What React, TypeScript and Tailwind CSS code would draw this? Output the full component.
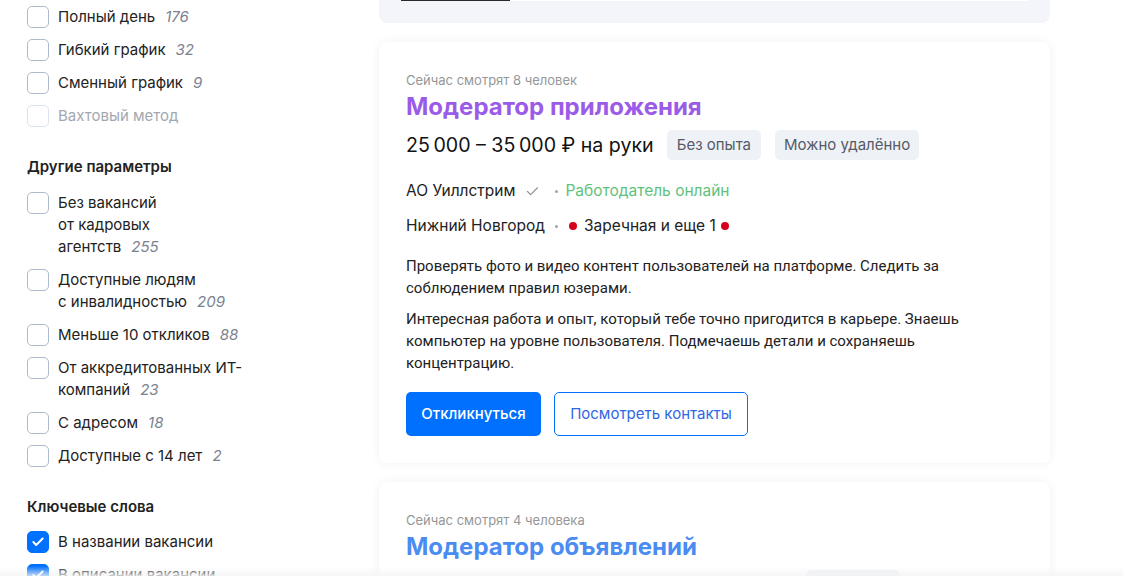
import { Check } from "lucide-react";

type FilterItem = {
  lines: string[];
  count?: number;
  checked?: boolean;
  disabled?: boolean;
};

const scheduleItems: FilterItem[] = [
  { lines: ["Полный день"], count: 176 },
  { lines: ["Гибкий график"], count: 32 },
  { lines: ["Сменный график"], count: 9 },
  { lines: ["Вахтовый метод"], disabled: true },
];

const otherItems: FilterItem[] = [
  { lines: ["Без вакансий", "от кадровых", "агентств"], count: 255 },
  { lines: ["Доступные людям", "с инвалидностью"], count: 209 },
  { lines: ["Меньше 10 откликов"], count: 88 },
  { lines: ["От аккредитованных ИТ-", "компаний"], count: 23 },
  { lines: ["С адресом"], count: 18 },
  { lines: ["Доступные с 14 лет"], count: 2 },
];

const keywordItems: FilterItem[] = [
  { lines: ["В названии вакансии"], checked: true },
  { lines: ["В описании вакансии"], checked: true },
];

function FilterRow({ item }: { item: FilterItem }) {
  return (
    <label className="flex items-start gap-[9px]">
      <span
        className={`flex h-[22px] w-[22px] shrink-0 items-center justify-center rounded-[5px] border ${
          item.checked
            ? "border-[#0070ff] bg-[#0070ff]"
            : item.disabled
              ? "border-[#dde3ea] bg-white"
              : "border-[#aebacb] bg-white"
        }`}
      >
        {item.checked && <Check className="h-[14px] w-[14px] text-white" strokeWidth={3.5} />}
      </span>
      <span
        className={`text-[15px] leading-[22px] ${item.disabled ? "text-[#a3a8b0]" : "text-[#222]"}`}
      >
        {item.lines.map((line, i) => (
          <span key={i} className="block whitespace-nowrap">
            {line}
            {i === item.lines.length - 1 && item.count !== undefined && (
              <span className="ml-[10px] italic text-[#7b8290]">{item.count}</span>
            )}
          </span>
        ))}
      </span>
    </label>
  );
}

function Sidebar() {
  return (
    <aside className="w-[379px] shrink-0 pl-[27px] pt-[6px]">
      <div className="flex flex-col gap-[11px]">
        {scheduleItems.map((it, i) => (
          <FilterRow key={i} item={it} />
        ))}
      </div>

      <h3 className="mt-[29px] text-[15px] font-semibold leading-[22px] text-[#222]">Другие параметры</h3>
      <div className="mt-[14px] flex flex-col gap-[11px]">
        {otherItems.map((it, i) => (
          <FilterRow key={i} item={it} />
        ))}
      </div>

      <h3 className="mt-[29px] text-[15px] font-semibold leading-[22px] text-[#222]">Ключевые слова</h3>
      <div className="mt-[13px] flex flex-col gap-[11px]">
        {keywordItems.map((it, i) => (
          <FilterRow key={i} item={it} />
        ))}
      </div>
    </aside>
  );
}

function MetroDot() {
  return <span className="inline-block h-[8px] w-[8px] rounded-full bg-[#d6001c]" />;
}

function Tags() {
  return (
    <>
      <span className="ml-[13px] rounded-[5px] bg-[#eef1f6] px-[10px] text-[15px] leading-[30px] text-[#555a66]">
        Без опыта
      </span>
      <span className="ml-[14px] rounded-[5px] bg-[#eef1f6] px-[9px] text-[15px] leading-[30px] text-[#555a66]">
        Можно удалённо
      </span>
    </>
  );
}

function VacancyCard() {
  return (
    <div className="rounded-[8px] bg-white px-[27px] pb-[27px] pt-[28px] shadow-[0_0_10px_rgba(40,60,120,0.07)]">
      <div className="text-[13px] leading-[20px] text-[#959799]">Сейчас смотрят 8 человек</div>
      <h2 className="mt-[2px] text-[24px] font-bold leading-[30px] text-[#9a5ce8]">Модератор приложения</h2>

      <div className="mt-[8px] flex items-center">
        <span className="text-[19.6px] leading-[30px] text-[#111]">25{"\u2009"}000 – 35{"\u2009"}000 ₽ на руки</span>
        <Tags />
      </div>

      <div className="mt-[20px] flex items-center text-[15.5px] leading-[22px] text-[#222]">
        <span>АО Уиллстрим</span>
        <Check className="ml-[10px] h-[15px] w-[15px] text-[#8a9099]" strokeWidth={1.8} />
        <span className="ml-[15px] mr-[7px] inline-block h-[3px] w-[3px] rounded-full bg-[#a0a4ab]" />
        <span className="text-[#5fc27c]">Работодатель онлайн</span>
      </div>

      <div className="mt-[13px] flex items-center text-[15.5px] leading-[22px] text-[#222]">
        <span>Нижний Новгород</span>
        <span className="ml-[10px] mr-[11px] inline-block h-[3px] w-[3px] rounded-full bg-[#a0a4ab]" />
        <MetroDot />
        <span className="ml-[7px] mr-[5px]">Заречная и еще 1</span>
        <MetroDot />
      </div>

      <div className="mt-[18px] font-['Roboto',sans-serif] text-[15px] leading-[22px] text-[#222]">
        <p>Проверять фото и видео контент пользователей на платформе. Следить за соблюдением правил юзерами.</p>
        <p className="mt-[9px]">
          Интересная работа и опыт, который тебе точно пригодится в карьере. Знаешь компьютер на уровне
          пользователя. Подмечаешь детали и сохраняешь концентрацию.
        </p>
      </div>

      <div className="mt-[18px] flex gap-[13px]">
        <button className="h-[44px] w-[135px] rounded-[5px] bg-[#0070ff] text-[15px] font-medium text-white">
          Откликнуться
        </button>
        <button className="h-[44px] w-[194px] rounded-[5px] border border-[#0070ff] bg-white text-[15px] text-[#2f66e6]">
          Посмотреть контакты
        </button>
      </div>
    </div>
  );
}

function SecondCard() {
  return (
    <div className="rounded-[8px] bg-white px-[27px] pb-[27px] pt-[28px] shadow-[0_0_10px_rgba(40,60,120,0.07)]">
      <div className="text-[13px] leading-[20px] text-[#959799]">Сейчас смотрят 4 человека</div>
      <h2 className="mt-[2px] text-[24px] font-bold leading-[30px] text-[#4a8cf2]">Модератор объявлений</h2>
      <div className="mt-[8px] flex items-center">
        <span className="text-[19.6px] leading-[30px] text-[#111]">
          от 30{"\u2009"}000 до 45{"\u2009"}000 ₽ за месяц, на руки
        </span>
        <span className="ml-[13px] rounded-[5px] bg-[#eef1f6] px-[10px] text-[15px] leading-[30px] text-[#555a66]">
          Без опыта
        </span>
      </div>
    </div>
  );
}

export default function App() {
  return (
    <div className="relative h-[576px] overflow-hidden bg-white font-['Inter',sans-serif]">
      <div className="flex">
        <Sidebar />
        <main className="w-[671px] shrink-0">
          <div className="rounded-b-[8px] bg-[#f4f5fa] px-[22px] pb-[22px]">
            <div className="flex h-[1px] bg-white">
              <div className="h-[1px] w-[109px] bg-[#2a2a2a]" />
            </div>
          </div>
          <div className="mt-[19px] flex flex-col gap-[19px]">
            <VacancyCard />
            <SecondCard />
          </div>
        </main>
      </div>
      <div className="pointer-events-none absolute bottom-0 left-0 right-0 h-[10px] bg-gradient-to-b from-transparent to-[#f4f4f4]/80" />
    </div>
  );
}
